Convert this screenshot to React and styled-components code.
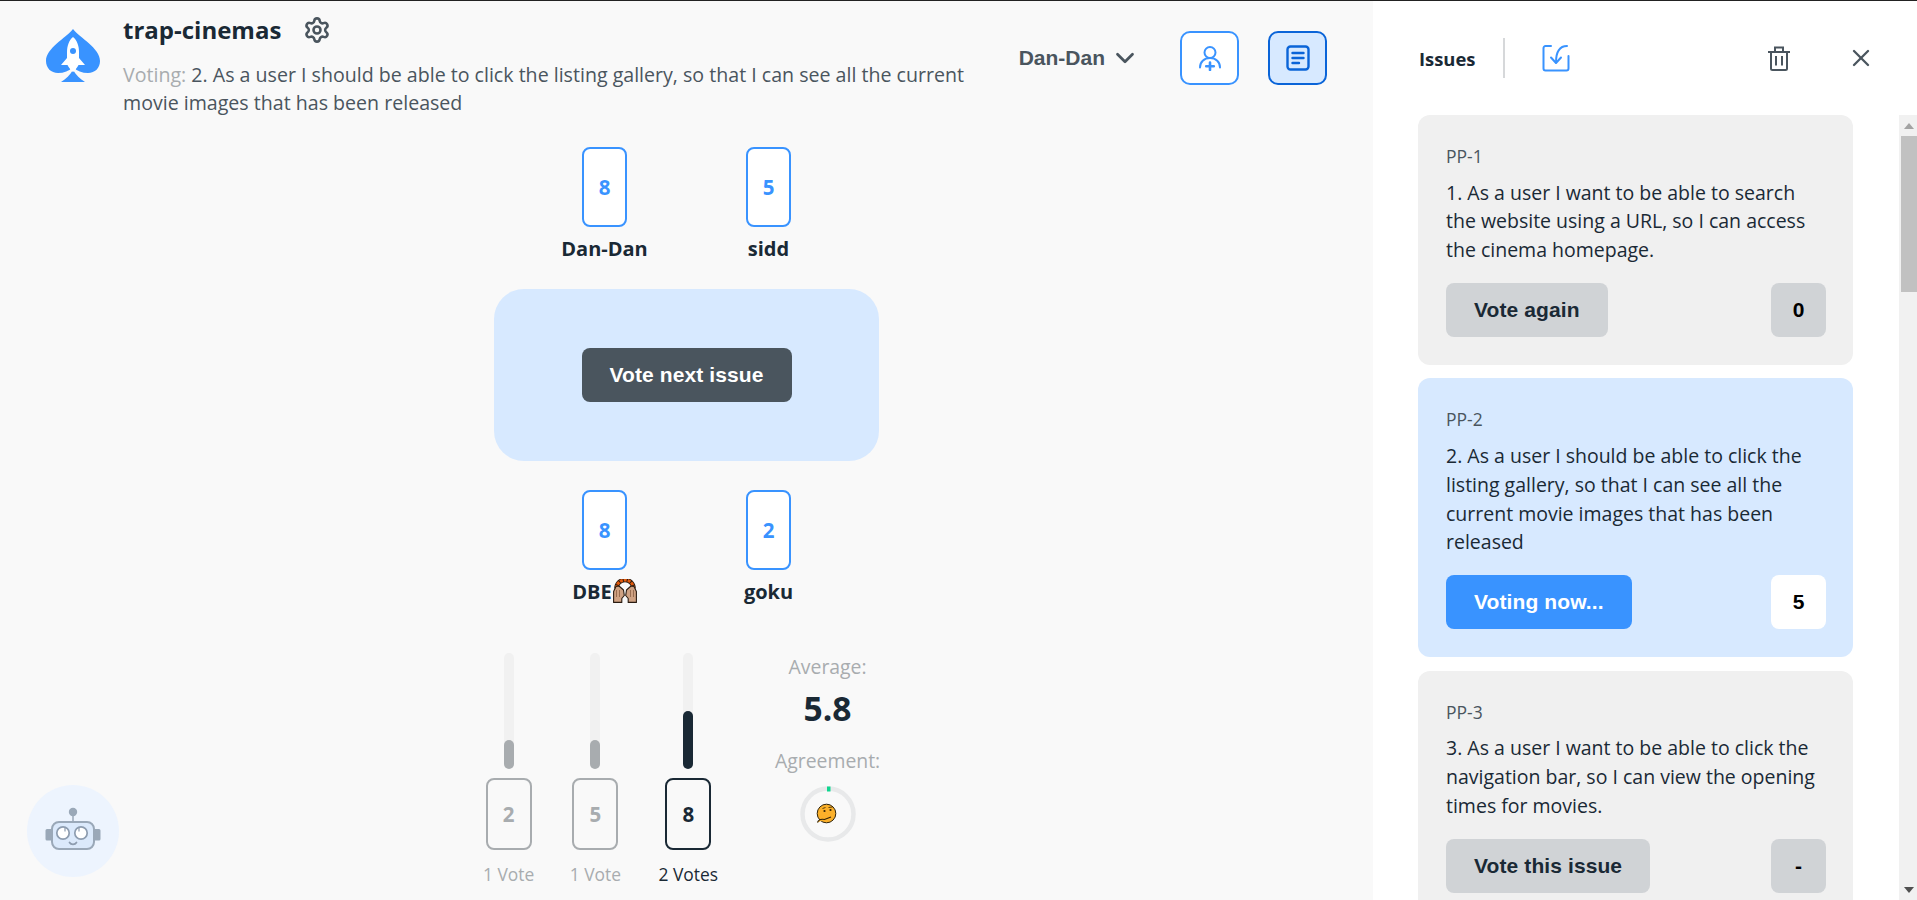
import React from 'react';
import styled, { createGlobalStyle } from 'styled-components';
import { ChevronDown, Settings, X } from 'lucide-react';

const BODY = '"Open Sans", "Noto Sans", sans-serif';
const ARIAL = '"Liberation Sans", Arial, sans-serif';
const BLUE = '#3993ff';
const INK = '#1a2935';
const SLATE = '#4a555e';
const MUTED = '#a8acaf';
const PALE = '#d7e9ff';

const Global = createGlobalStyle`
  html, body { margin: 0; height: 100%; overflow: hidden; }
  body { font-family: ${BODY}; color: ${INK}; background: #fff; }
  * { box-sizing: border-box; }
`;

const Page = styled.div`
  display: flex;
  height: 900px;
  border-top: 1px solid #222;
  overflow: hidden;
`;
const Main = styled.main`
  position: relative;
  flex: 0 0 1373px;
  background: #f9f9f9;
`;
const Header = styled.header`
  display: flex;
  align-items: flex-start;
  height: 116px;
  padding-left: 46px;
`;
const LogoMark = styled.svg`
  flex: none;
  width: 55px;
  height: 53px;
  margin-top: 28px;
`;
const Heading = styled.div`
  width: 850px;
  margin-left: 22px;
  padding-top: 16px;
`;
const TitleRow = styled.div`
  display: flex;
  align-items: center;
  gap: 22px;
  height: 26px;
  margin-bottom: 18px;
  color: ${SLATE};
`;
const Title = styled.h1`
  margin: 0;
  font-size: 24px;
  font-weight: 700;
  line-height: 26px;
  color: ${INK};
`;
const Voting = styled.p`
  margin: 0;
  font-size: 19.6px;
  line-height: 28px;
  color: ${SLATE};
`;
const VotingTag = styled.span`
  color: ${MUTED};
`;
const Controls = styled.div`
  display: flex;
  align-items: center;
  height: 54px;
  margin: 30px 46px 0 auto;
`;
const UserMenu = styled.div`
  display: flex;
  align-items: center;
  gap: 5px;
  margin-right: 40px;
  font: 700 21px ${ARIAL};
  color: ${SLATE};
`;
const SquareButton = styled.button`
  display: flex;
  align-items: center;
  justify-content: center;
  width: 59px;
  height: 54px;
  margin-left: ${(p) => (p.$first ? 0 : '29px')};
  padding: 0;
  border: 2px solid ${(p) => (p.$active ? '#0a64d8' : BLUE)};
  border-radius: 10px;
  background: ${(p) => (p.$active ? PALE : '#fff')};
`;
const Table = styled.section`
  display: flex;
  flex-direction: column;
  align-items: center;
  padding-top: 30px;
`;
const Seats = styled.div`
  display: flex;
  justify-content: center;
`;
const Seat = styled.div`
  display: flex;
  flex-direction: column;
  align-items: center;
  width: 164px;
`;
const PlayerCard = styled.div`
  display: flex;
  align-items: center;
  justify-content: center;
  width: 45px;
  height: 80px;
  border: 2px solid ${BLUE};
  border-radius: 8px;
  background: #fff;
  font-size: 20.5px;
  font-weight: 700;
  color: ${BLUE};
`;
const PlayerName = styled.div`
  display: flex;
  align-items: center;
  height: 24px;
  margin-top: 9px;
  font-size: 20px;
  font-weight: 700;
  color: ${INK};
`;
const Felt = styled.div`
  display: flex;
  align-items: center;
  justify-content: center;
  width: 385px;
  height: 172px;
  margin: 29px 0;
  border-radius: 30px;
  background: ${PALE};
`;
const ActionButton = styled.button`
  height: 54px;
  padding: 0 28px;
  border: 0;
  border-radius: 8px;
  background: ${SLATE};
  color: #fff;
  font: 700 21px ${ARIAL};
  letter-spacing: 0.1px;
`;
const Results = styled.section`
  display: flex;
  align-items: flex-start;
  width: 396px;
  margin: 50px 0 0 483px;
`;
const VoteColumn = styled.div`
  display: flex;
  flex-direction: column;
  align-items: center;
  margin-right: ${(p) => p.$gap}px;
  color: ${(p) => (p.$lead ? INK : MUTED)};
`;
const BarTrack = styled.div`
  display: flex;
  align-items: flex-end;
  width: 10px;
  height: 116px;
  border-radius: 5px;
  background: #f1f1f1;
`;
const BarFill = styled.div`
  width: 100%;
  border-radius: 5px;
  background: ${(p) => (p.$lead ? INK : MUTED)};
`;
const VoteCard = styled.div`
  display: flex;
  align-items: center;
  justify-content: center;
  width: 46px;
  height: 72px;
  margin-top: 9px;
  border: 2px solid currentColor;
  border-radius: 8px;
  font-size: 20.5px;
  font-weight: 700;
`;
const VoteCount = styled.div`
  margin-top: 12px;
  font-size: 17.4px;
  line-height: 24px;
  white-space: nowrap;
`;
const Stats = styled.div`
  display: flex;
  flex-direction: column;
  align-items: center;
  width: 105px;
  padding-top: 2px;
`;
const StatLabel = styled.div`
  font-size: 19.4px;
  line-height: 24px;
  white-space: nowrap;
  color: ${MUTED};
`;
const Average = styled.div`
  margin: 7px 0 19px;
  font-size: 33.6px;
  font-weight: 700;
  line-height: 44px;
  color: ${INK};
`;
const Ring = styled.svg`
  width: 56px;
  height: 56px;
  margin-top: 13px;
`;
const Bot = styled.button`
  position: absolute;
  left: 27px;
  bottom: 23px;
  display: flex;
  align-items: center;
  justify-content: center;
  width: 92px;
  height: 92px;
  padding: 0;
  border: 0;
  border-radius: 50%;
  background: #edf4fe;
`;
const Side = styled.aside`
  display: flex;
  flex-direction: column;
  flex: 1;
  min-width: 0;
  background: #fff;
`;
const SideBar = styled.div`
  display: flex;
  align-items: center;
  flex: 0 0 114px;
  padding: 0 42px 0 46px;
`;
const SideTitle = styled.h2`
  margin: 0;
  font-size: 18.4px;
  font-weight: 700;
  color: ${INK};
`;
const Rule = styled.span`
  width: 2px;
  height: 40px;
  margin: 0 37px 0 28px;
  background: #d6d8da;
`;
const RightTools = styled.div`
  display: flex;
  align-items: center;
  gap: 57px;
  margin-left: auto;
  color: ${SLATE};
`;
const SideBody = styled.div`
  display: flex;
  flex: 1;
  min-height: 0;
`;
const IssueList = styled.div`
  display: flex;
  flex-direction: column;
  flex: 1;
  gap: 13.5px;
  padding-left: 45px;
  overflow: hidden;
`;
const Issue = styled.article`
  flex: none;
  width: 435px;
  padding: 29px 27px 28px 28px;
  border-radius: 12px;
  background: ${(p) => (p.$current ? PALE : '#f0f0f0')};
`;
const IssueKey = styled.div`
  font-size: 17.5px;
  line-height: 24px;
  color: ${SLATE};
`;
const IssueText = styled.p`
  margin: 10.6px 0 18px;
  font-size: 19.5px;
  line-height: 28.8px;
  color: ${INK};
`;
const IssueFoot = styled.div`
  display: flex;
  justify-content: space-between;
`;
const IssueButton = styled(ActionButton)`
  background: ${(p) => (p.$current ? BLUE : '#d0d3d6')};
  color: ${(p) => (p.$current ? '#fff' : INK)};
`;
const Score = styled.div`
  display: flex;
  align-items: center;
  justify-content: center;
  width: 55px;
  height: 54px;
  border-radius: 8px;
  background: ${(p) => (p.$current ? '#fff' : '#d0d3d6')};
  font: 700 21px ${ARIAL};
  color: #000;
`;
const Scrollbar = styled.div`
  display: flex;
  flex-direction: column;
  flex: 0 0 18px;
  padding-left: 2px;
  background: #f1f1f1;
`;
const ScrollArrow = styled.div`
  display: flex;
  align-items: center;
  justify-content: center;
  flex: 0 0 21px;
  margin-top: ${(p) => (p.$down ? 'auto' : 0)};
`;
const ScrollThumb = styled.div`
  height: 156px;
  background: #c1c1c1;
`;

const Logo = () => (
  <LogoMark viewBox="0 0 55 53" aria-label="logo">
    <path fill={BLUE} d="M27 0C20 9 0 19 0 32C0 39 5 44 12 44C18 44 23 42 27 38C31 42 36 44 42 44C49 44 54 39 54 32C54 19 34 9 27 0Z" />
    <path fill={BLUE} d="M15 53C20 50 24 46 27 41C30 46 34 50 39 53Z" />
    <path fill="#fff" d="M27 8C23 11 21 17 21 23V29L15 36H21.5C22.5 38 24 39.5 24.5 41L27 43L29.5 41C30 39.5 31.5 38 32.5 36H39L33 29V23C33 17 31 11 27 8Z" />
    <circle cx="27" cy="22" r="3" fill={BLUE} />
  </LogoMark>
);

const UserPlus = () => (
  <svg width="26" height="26" viewBox="0 0 26 26" fill="none" stroke={BLUE} strokeWidth="2" strokeLinecap="round">
    <circle cx="13" cy="7.5" r="5.5" />
    <path d="M3 22.5C3 17 7 13 13 13C19 13 23 17 23 22.5" />
    <path d="M13 17.5V25M9.2 21.2H16.8" strokeWidth="2.6" />
  </svg>
);
const Notes = () => (
  <svg width="26" height="28" viewBox="0 0 26 28" fill="none" stroke="#0a64d8" strokeWidth="2.4" strokeLinecap="round">
    <rect x="2.5" y="2.5" width="21" height="23" rx="3" />
    <path d="M7.5 9H18.5M7.5 14H18.5M7.5 19H14" />
  </svg>
);
const ImportIcon = () => (
  <svg width="28" height="28" viewBox="0 0 28 28" fill="none" stroke={BLUE} strokeWidth="2" strokeLinecap="round" strokeLinejoin="round">
    <path d="M9 2H3.5A2 2 0 0 0 1.5 4V24.5A2 2 0 0 0 3.5 26.5H24.5A2 2 0 0 0 26.5 24.5V12" />
    <path d="M25 2C18 2 14 7 14 18.5" />
    <path d="M9 13.5L14 19L19 13.5" />
  </svg>
);
const Trash = () => (
  <svg width="22" height="25" viewBox="0 0 22 25" fill="none" stroke={SLATE} strokeWidth="2">
    <path d="M0 6H22M7 6V1.5H15V6" />
    <path d="M3 6V22.5A1.5 1.5 0 0 0 4.5 24H17.5A1.5 1.5 0 0 0 19 22.5V6" />
    <path d="M8 10V19.5M14 10V19.5" />
  </svg>
);
const Hands = () => (
  <svg width="24" height="24" viewBox="0 0 24 24" style={{ marginLeft: 1 }} aria-label="raising hands">
    <path d="M3.5 9.5A8.5 8.5 0 0 1 20.5 9.5" fill="none" stroke="#2a1c12" strokeWidth="4.6" />
    <path d="M3.5 9.5A8.5 8.5 0 0 1 20.5 9.5" fill="none" stroke="#e2590c" strokeWidth="3" strokeDasharray="3 1" />
    <path d="M.6 23.4V12.5L3 7.5L6 7L10.5 11L11.3 16.5L8.8 19.5V23.4Z" fill="#cfa283" stroke="#2a1c12" strokeWidth="1.1" strokeLinejoin="round" />
    <path d="M23.4 23.4V12.5L21 7.5L18 7L13.5 11L12.7 16.5L15.2 19.5V23.4Z" fill="#cfa283" stroke="#2a1c12" strokeWidth="1.1" strokeLinejoin="round" />
    <path d="M3.5 11V18M6.5 11V18" stroke="#8a6044" strokeWidth=".8" />
    <path d="M20.5 11V18M17.5 11V18" stroke="#8a6044" strokeWidth=".8" />
  </svg>
);
const RobotIcon = () => (
  <svg width="56" height="48" viewBox="0 0 56 48">
    <circle cx="28" cy="5" r="4.2" fill="#9aa8b8" />
    <path d="M28 8V15" stroke="#9aa8b8" strokeWidth="1.5" />
    <path d="M6 22H2A1.5 1.5 0 0 0 .5 23.5V32A1.5 1.5 0 0 0 2 33.5H6ZM50 22H54A1.5 1.5 0 0 1 55.5 23.5V32A1.5 1.5 0 0 1 54 33.5H50Z" fill="#9aa8b8" />
    <rect x="7" y="15" width="42" height="27" rx="7" fill="#dbe9fb" stroke="#9aa8b8" strokeWidth="2" />
    <circle cx="18" cy="26" r="6.2" fill="#fff" stroke="#8d9caf" strokeWidth="1.7" />
    <circle cx="36" cy="26" r="6.2" fill="#fff" stroke="#8d9caf" strokeWidth="1.7" />
    <path d="M20 24.5V21M34 24.5V21" stroke="#8d9caf" strokeWidth="1.2" />
    <path d="M24.5 35.5C26 38 30 38 31.5 35.5" fill="none" stroke="#8d9caf" strokeWidth="1.7" strokeLinecap="round" />
  </svg>
);
const AgreementRing = () => (
  <Ring viewBox="0 0 56 56" aria-label="agreement">
    <circle cx="28" cy="28" r="25.5" fill="none" stroke="#e8e9ea" strokeWidth="4.5" />
    <rect x="27" y="0.5" width="3.5" height="5" fill="#0fd68f" />
    <circle cx="26.5" cy="27.5" r="9.3" fill="#fbb02a" stroke="#2f2208" strokeWidth="1" />
    <path d="M17.5 36.5C19 32.5 22 33 24.5 33.5L31 31" fill="#fbb02a" stroke="#2f2208" strokeWidth="1.2" />
    <circle cx="24.5" cy="25" r="1.1" fill="#2f2208" />
    <circle cx="30.5" cy="24" r="1.1" fill="#2f2208" />
    <path d="M28.5 21.5L32.5 21M22.5 22.5L25.5 21.5" stroke="#2f2208" strokeWidth="0.8" />
  </Ring>
);
const TriangleArrow = ({ down }) => (
  <svg width="10" height="6" viewBox="0 0 10 6">
    <path d={down ? 'M0 0H10L5 6Z' : 'M5 0L10 6H0Z'} fill={down ? '#505050' : '#a3a3a3'} />
  </svg>
);

const issues = [
  { key: 'PP-1', text: '1. As a user I want to be able to search the website using a URL, so I can access the cinema homepage.', action: 'Vote again', score: '0' },
  { key: 'PP-2', text: '2. As a user I should be able to click the listing gallery, so that I can see all the current movie images that has been released', action: 'Voting now...', score: '5', current: true },
  { key: 'PP-3', text: '3. As a user I want to be able to click the navigation bar, so I can view the opening times for movies.', action: 'Vote this issue', score: '-' },
];
const tally = [
  { value: '2', votes: '1 Vote', fill: 29, gap: 35.5 },
  { value: '5', votes: '1 Vote', fill: 29, gap: 37.5 },
  { value: '8', votes: '2 Votes', fill: 58, gap: 57, lead: true },
];

const Player = ({ name, value, children }) => (
  <Seat>
    <PlayerCard>{value}</PlayerCard>
    <PlayerName>{name}{children}</PlayerName>
  </Seat>
);

export default function App() {
  return (
    <>
      <Global />
      <Page>
        <Main>
          <Header>
            <Logo />
            <Heading>
              <TitleRow>
                <Title>trap-cinemas</Title>
                <Settings size={28} strokeWidth={2.2} />
              </TitleRow>
              <Voting>
                <VotingTag>Voting: </VotingTag>
                2. As a user I should be able to click the listing gallery, so that I can see all the current movie images that has been released
              </Voting>
            </Heading>
            <Controls>
              <UserMenu>
                Dan-Dan
                <ChevronDown size={30} strokeWidth={2.2} />
              </UserMenu>
              <SquareButton $first aria-label="Invite"><UserPlus /></SquareButton>
              <SquareButton $active aria-label="Issues"><Notes /></SquareButton>
            </Controls>
          </Header>
          <Table>
            <Seats>
              <Player name="Dan-Dan" value="8" />
              <Player name="sidd" value="5" />
            </Seats>
            <Felt>
              <ActionButton>Vote next issue</ActionButton>
            </Felt>
            <Seats>
              <Player name="DBE" value="8"><Hands /></Player>
              <Player name="goku" value="2" />
            </Seats>
          </Table>
          <Results>
            {tally.map((t) => (
              <VoteColumn key={t.value} $gap={t.gap} $lead={t.lead}>
                <BarTrack>
                  <BarFill $lead={t.lead} style={{ height: t.fill }} />
                </BarTrack>
                <VoteCard>{t.value}</VoteCard>
                <VoteCount>{t.votes}</VoteCount>
              </VoteColumn>
            ))}
            <Stats>
              <StatLabel>Average:</StatLabel>
              <Average>5.8</Average>
              <StatLabel>Agreement:</StatLabel>
              <AgreementRing />
            </Stats>
          </Results>
          <Bot aria-label="Robot"><RobotIcon /></Bot>
        </Main>
        <Side>
          <SideBar>
            <SideTitle>Issues</SideTitle>
            <Rule />
            <ImportIcon />
            <RightTools>
              <Trash />
              <X size={28} strokeWidth={2} />
            </RightTools>
          </SideBar>
          <SideBody>
            <IssueList>
              {issues.map((i) => (
                <Issue key={i.key} $current={i.current}>
                  <IssueKey>{i.key}</IssueKey>
                  <IssueText>{i.text}</IssueText>
                  <IssueFoot>
                    <IssueButton $current={i.current}>{i.action}</IssueButton>
                    <Score $current={i.current}>{i.score}</Score>
                  </IssueFoot>
                </Issue>
              ))}
            </IssueList>
            <Scrollbar>
              <ScrollArrow><TriangleArrow /></ScrollArrow>
              <ScrollThumb />
              <ScrollArrow $down><TriangleArrow down /></ScrollArrow>
            </Scrollbar>
          </SideBody>
        </Side>
      </Page>
    </>
  );
}
